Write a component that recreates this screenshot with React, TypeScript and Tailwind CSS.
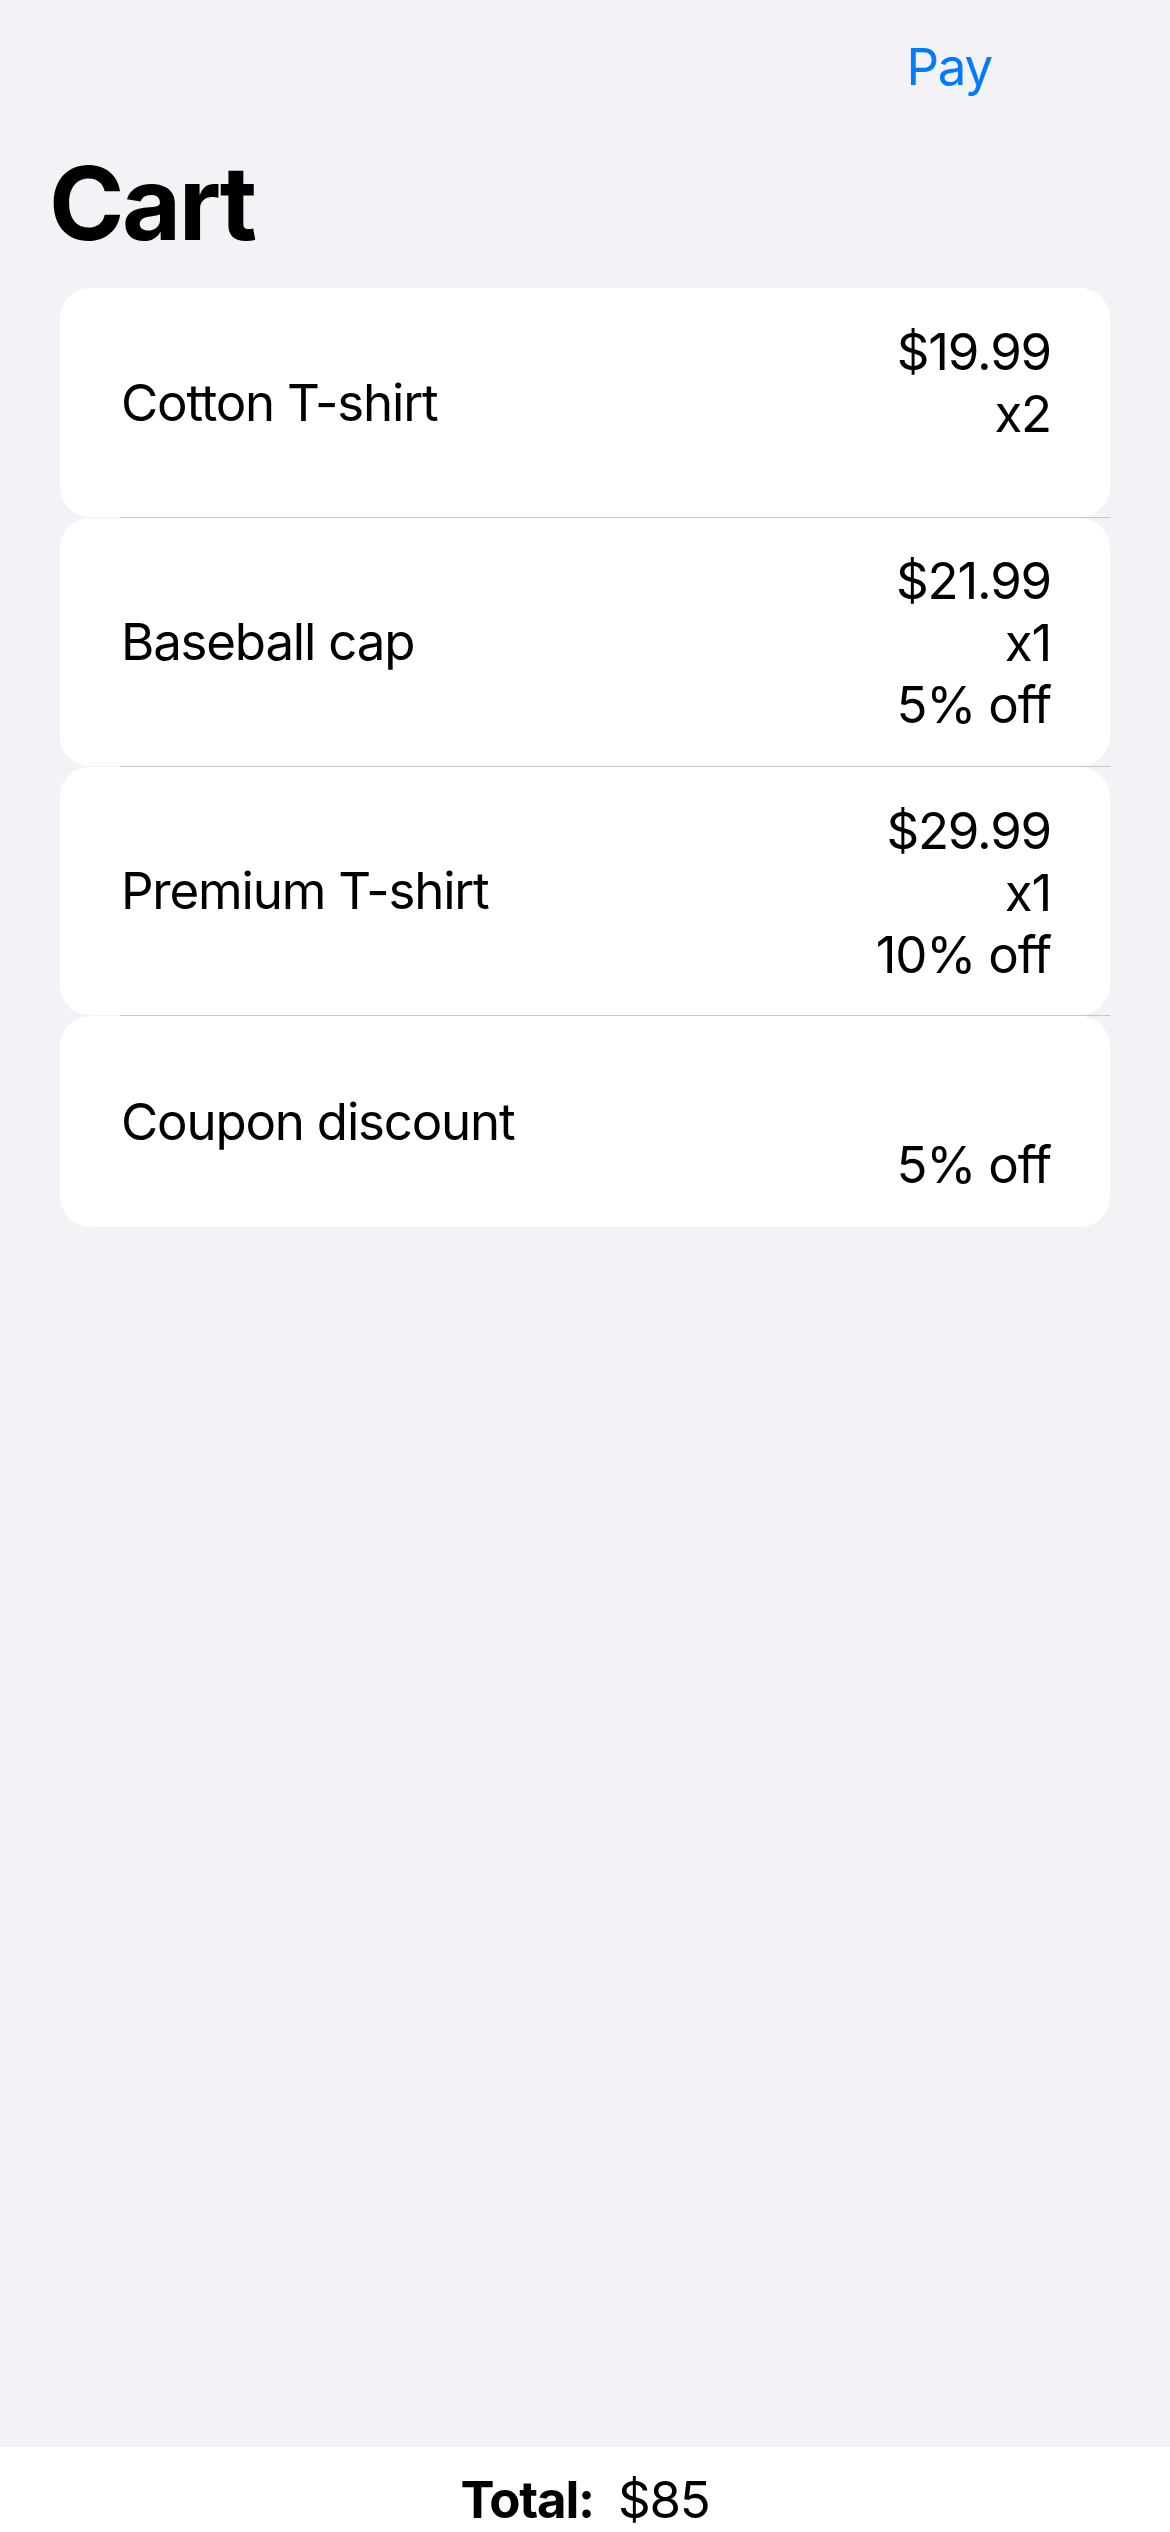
import React from 'react';

type Row = {
  name: string;
  lines: string[];
  rowClass: string;
  rightClass: string;
};

const rows: Row[] = [
  { name: 'Cotton T-shirt', lines: ['$19.99', 'x2'], rowClass: 'h-[229px]', rightClass: 'pt-[33px]' },
  { name: 'Baseball cap', lines: ['$21.99', 'x1', '5% off'], rowClass: 'h-[248px]', rightClass: 'pt-[32px]' },
  { name: 'Premium T-shirt', lines: ['$29.99', 'x1', '10% off'], rowClass: 'h-[248px]', rightClass: 'pt-[33px]' },
  { name: 'Coupon discount', lines: ['5% off'], rowClass: 'h-[211px]', rightClass: 'pt-[118px]' },
];

const App: React.FC = () => {
  return (
    <div className="h-[2532px] w-[1170px] flex flex-col bg-[#f2f2f7] text-black font-['Inter','Noto_Sans',sans-serif] tracking-[-1.2px] overflow-hidden">
      {/* Nav bar */}
      <div className="flex justify-end pt-[36px] pr-[178px]">
        <button className="text-[51px] leading-[62px] text-[#007aff]">Pay</button>
      </div>
      <h1 className="mt-[44px] pl-[49px] text-[102px] leading-[122px] font-bold tracking-[-2.5px]">Cart</h1>

      {/* List */}
      <div className="flex-1 mt-[24px] mx-[60px]">
        {rows.map((row, i) => (
          <React.Fragment key={row.name}>
            <div className={`flex items-start justify-between bg-white rounded-[30px] pl-[61px] pr-[59px] ${row.rowClass}`}>
              <span className="self-center text-[51px] leading-[62px]">{row.name}</span>
              <div className={`flex flex-col items-end text-[51px] leading-[62px] ${row.rightClass}`}>
                {row.lines.map(l => (
                  <span key={l}>{l}</span>
                ))}
              </div>
            </div>
            {i < rows.length - 1 && <div className="h-px ml-[60px] bg-[#c6c6c8]" />}
          </React.Fragment>
        ))}
      </div>

      {/* Footer */}
      <div className="h-[85px] shrink-0 bg-white flex justify-center gap-[24px] pt-[22px] text-[51px] leading-[62px]">
        <span className="font-bold">Total:</span>
        <span>$85</span>
      </div>
    </div>
  );
};

export default App;
